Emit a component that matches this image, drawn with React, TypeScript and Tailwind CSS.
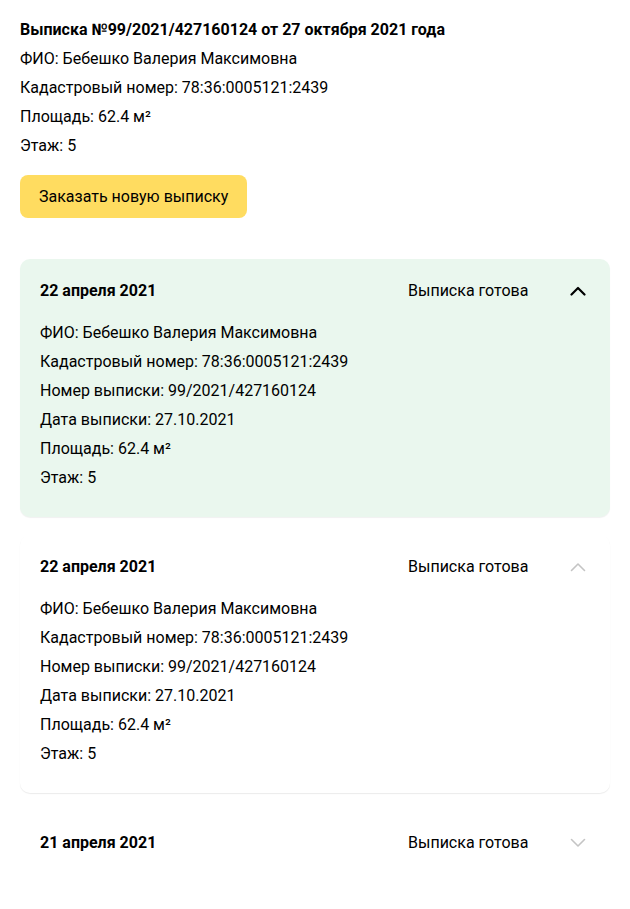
interface Extract {
  date: string;
  status: string;
  open: boolean;
  active: boolean;
}

const details = [
  "ФИО: Бебешко Валерия Максимовна",
  "Кадастровый номер: 78:36:0005121:2439",
  "Номер выписки: 99/2021/427160124",
  "Дата выписки: 27.10.2021",
  "Площадь: 62.4 м²",
  "Этаж: 5",
];

const items: Extract[] = [
  { date: "22 апреля 2021", status: "Выписка готова", open: true, active: true },
  { date: "22 апреля 2021", status: "Выписка готова", open: true, active: false },
  { date: "21 апреля 2021", status: "Выписка готова", open: false, active: false },
];

function Chevron({ up, dark }: { up: boolean; dark: boolean }) {
  return (
    <svg
      width="16"
      height="10"
      viewBox="0 0 16 10"
      fill="none"
      stroke={dark ? "#000" : "#c4c4c4"}
      strokeWidth={dark ? 2.2 : 1.6}
      strokeLinecap="round"
      strokeLinejoin="round"
      className="mr-1"
    >
      {up ? <polyline points="1.5,8.5 8,2 14.5,8.5" /> : <polyline points="1.5,1.5 8,8 14.5,1.5" />}
    </svg>
  );
}

function ExtractCard({ date, status, open, active }: Extract) {
  return (
    <div
      className={
        active
          ? "rounded-[10px] bg-[#eaf7ee] px-5 pt-5 pb-[25px] shadow-[0_1px_1px_rgba(0,0,0,0.06)]"
          : open
          ? "rounded-[10px] bg-white px-5 pt-5 pb-[25px] shadow-[0_1px_1px_rgba(0,0,0,0.08)]"
          : "rounded-[10px] bg-white px-5 pt-5 pb-[25px]"
      }
    >
      <div className="flex h-6 items-center">
        <span className="flex-1 font-bold">{date}</span>
        <span className="w-[162px]">{status}</span>
        <Chevron up={open} dark={active} />
      </div>
      {open && (
        <div className="mt-[15px]">
          {details.map((d) => (
            <p key={d} className="leading-[29px]">
              {d}
            </p>
          ))}
        </div>
      )}
    </div>
  );
}

export default function App() {
  return (
    <div
      className="min-h-[909px] w-[630px] bg-white px-5 pt-[15px] text-[16px] text-black"
      style={{ fontFamily: "Roboto, 'Noto Sans', sans-serif" }}
    >
      <div className="leading-[29px]">
        <p className="font-bold">Выписка №99/2021/427160124 от 27 октября 2021 года</p>
        <p>ФИО: Бебешко Валерия Максимовна</p>
        <p>Кадастровый номер: 78:36:0005121:2439</p>
        <p>Площадь: 62.4 м²</p>
        <p>Этаж: 5</p>
      </div>
      <button className="mt-[15px] h-[43px] rounded-[8px] bg-[#ffdc60] px-[19px] text-[16px]">
        Заказать новую выписку
      </button>
      <div className="mt-[41px] flex flex-col gap-[18px]">
        {items.map((it, i) => (
          <ExtractCard key={i} {...it} />
        ))}
      </div>
    </div>
  );
}
